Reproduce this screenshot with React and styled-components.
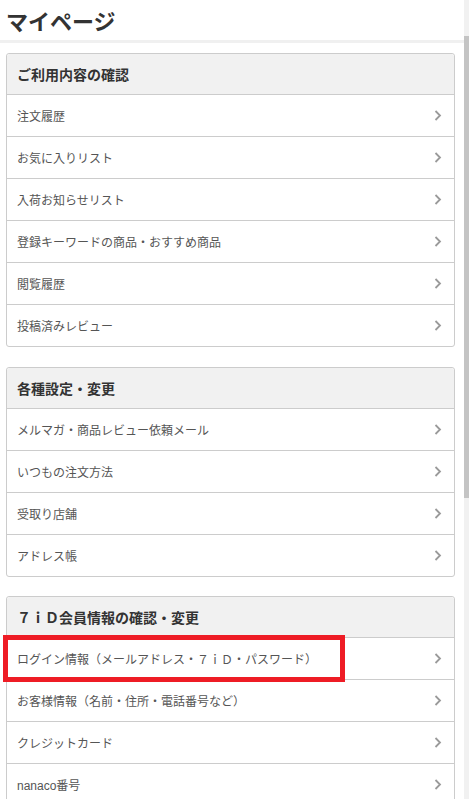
import React from 'react'
import styled, { createGlobalStyle } from 'styled-components'

const GlobalStyle = createGlobalStyle`
  body {
    margin: 0;
    background: #fff;
    font-family: 'Liberation Sans', 'Noto Sans CJK JP', sans-serif;
    color: #333;
  }
`

const sections = [
  {
    title: 'ご利用内容の確認',
    items: ['注文履歴', 'お気に入りリスト', '入荷お知らせリスト', '登録キーワードの商品・おすすめ商品', '閲覧履歴', '投稿済みレビュー'],
  },
  {
    title: '各種設定・変更',
    items: ['メルマガ・商品レビュー依頼メール', 'いつもの注文方法', '受取り店舗', 'アドレス帳'],
  },
  {
    title: '７ｉＤ会員情報の確認・変更',
    items: [
      'ログイン情報（メールアドレス・７ｉＤ・パスワード）',
      'お客様情報（名前・住所・電話番号など）',
      'クレジットカード',
      'nanaco番号',
      'セブンマイル',
      '退会',
    ],
  },
  {
    title: 'その他',
    items: ['よくあるご質問', 'お問い合わせ', 'ご利用ガイド', 'ログアウト'],
  },
]

const Chevron = () => (
  <svg width="8" height="11" viewBox="0 0 8 11" fill="none">
    <polyline points="1.5,1 6,5.5 1.5,10" stroke="#9a9a9a" strokeWidth="1.8" />
  </svg>
)

const App = () => {
  return (
    <>
      <GlobalStyle />
      <StTitleBar>
        <StTitle>マイページ</StTitle>
      </StTitleBar>
      <StContent>
        {sections.map((section) => (
          <StCard key={section.title}>
            <StCardHeader>{section.title}</StCardHeader>
            {section.items.map((item, i) => (
              <StRow key={item} $highlight={section.title.startsWith('７') && i === 0}>
                <StRowText>{item}</StRowText>
                <Chevron />
              </StRow>
            ))}
          </StCard>
        ))}
      </StContent>
      {/* 画面右のスクロールバー */}
      <StScrollTrack>
        <StScrollThumb />
      </StScrollTrack>
    </>
  )
}

export default App

const StTitleBar = styled.header`
  height: 40px;
  display: flex;
  align-items: center;
  padding-left: 6px;
  border-bottom: 3px solid #f0f0f0;
`

const StTitle = styled.h1`
  margin: 0;
  font-size: 22px;
  font-weight: 700;
  color: #333;
`

const StContent = styled.main`
  display: flex;
  flex-direction: column;
  gap: 19.5px;
  padding: 10px 14px 40px 6px;
`

const StCard = styled.section`
  border: 1px solid #cccccc;
  border-radius: 3px;
  background: #fff;
`

const StCardHeader = styled.h2`
  margin: 0;
  height: 40px;
  display: flex;
  align-items: center;
  padding-left: 10px;
  background: #f1f1f1;
  font-size: 14px;
  font-weight: 700;
  color: #333;
  border-radius: 3px 3px 0 0;
`

const StRow = styled.a`
  position: relative;
  height: 41px;
  display: flex;
  align-items: center;
  justify-content: space-between;
  padding: 0 12px 0 10px;
  border-top: 1px solid #cccccc;
  cursor: pointer;

  &::after {
    content: '';
    display: ${(props) => (props.$highlight ? 'block' : 'none')};
    position: absolute;
    z-index: 2;
    top: -3px;
    left: -4px;
    width: 342px;
    height: 47px;
    box-sizing: border-box;
    border: 5px solid #ee1c25;
    pointer-events: none;
  }
`

const StRowText = styled.span`
  font-size: 12px;
  color: #555;
`

const StScrollTrack = styled.div`
  position: fixed;
  top: 0;
  right: 0;
  width: 5px;
  height: 100vh;
  background: #f1f1f1;
`

const StScrollThumb = styled.div`
  margin-top: 36px;
  height: 462px;
  background: #c4c4c4;
`
